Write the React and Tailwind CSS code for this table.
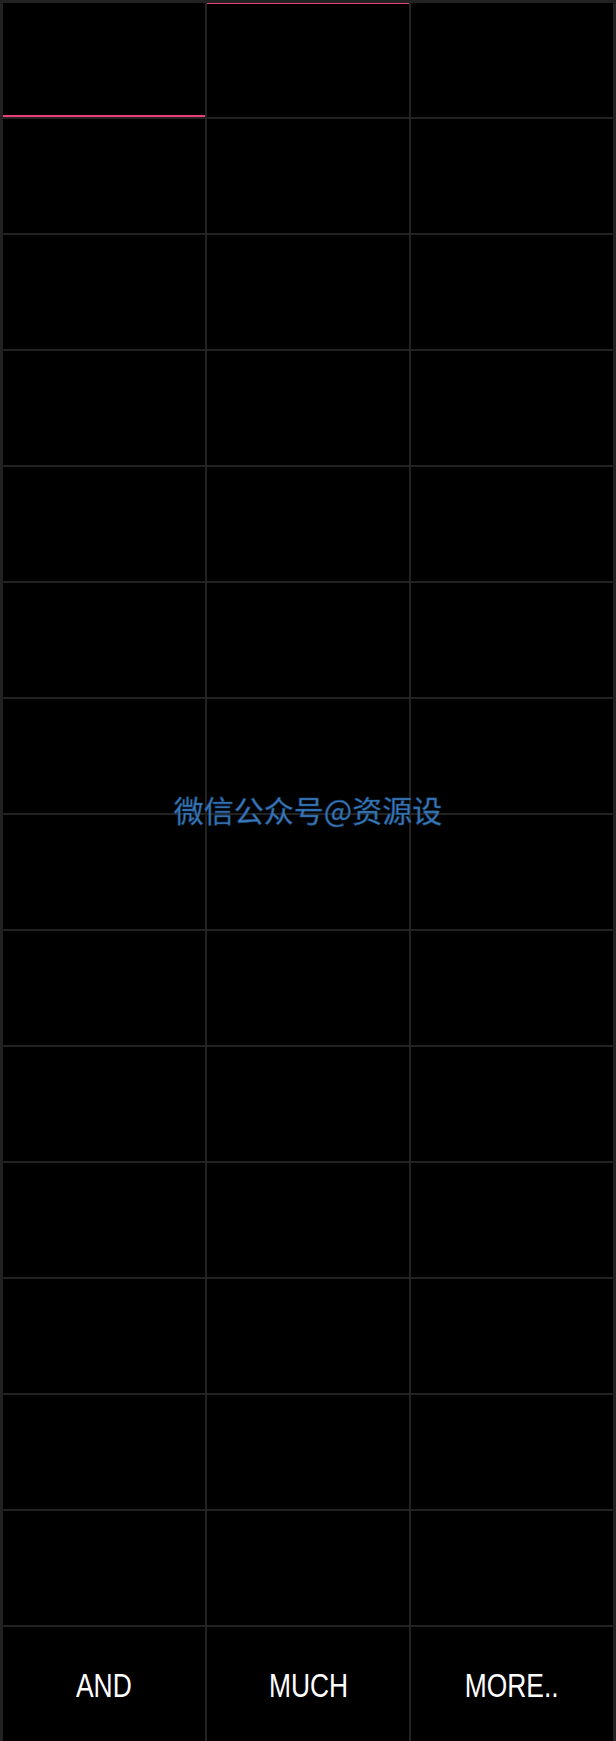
const cells = Array.from({ length: 42 }, (_, i) => i)
const words = ['AND', 'MUCH', 'MORE..']

export default function App() {
  return (
    <div className="relative w-[616px] h-[1741px] bg-[#222222] pt-[3px] px-[3px] overflow-hidden">
      <div className="grid grid-cols-3 gap-[2px] auto-rows-[114px]">
        {cells.map((i) => (
          <div key={i} className="relative bg-black">
            {i === 0 && <div className="absolute left-0 right-0 bottom-0 h-[2px] bg-[#e8407a]" />}
            {i === 1 && <div className="absolute left-0 right-0 top-0 h-[1px] bg-[#e8407a]" />}
          </div>
        ))}
        {words.map((w) => (
          <div key={w} className="bg-black flex items-center justify-center pt-[2px]">
            <span
              className="inline-block text-white text-[33px] leading-none scale-x-[0.8]"
              style={{ fontFamily: '"Liberation Sans", Arial, sans-serif' }}
            >
              {w}
            </span>
          </div>
        ))}
      </div>

      <div
        className="absolute left-0 right-0 top-[794px] text-center text-[30px] leading-none text-[#3b7bbf] [-webkit-text-stroke:0.6px_#1b4a78]"
        style={{ fontFamily: '"Noto Sans CJK SC", "Liberation Serif", serif' }}
      >
        微信公众号@资源设
      </div>
    </div>
  )
}
